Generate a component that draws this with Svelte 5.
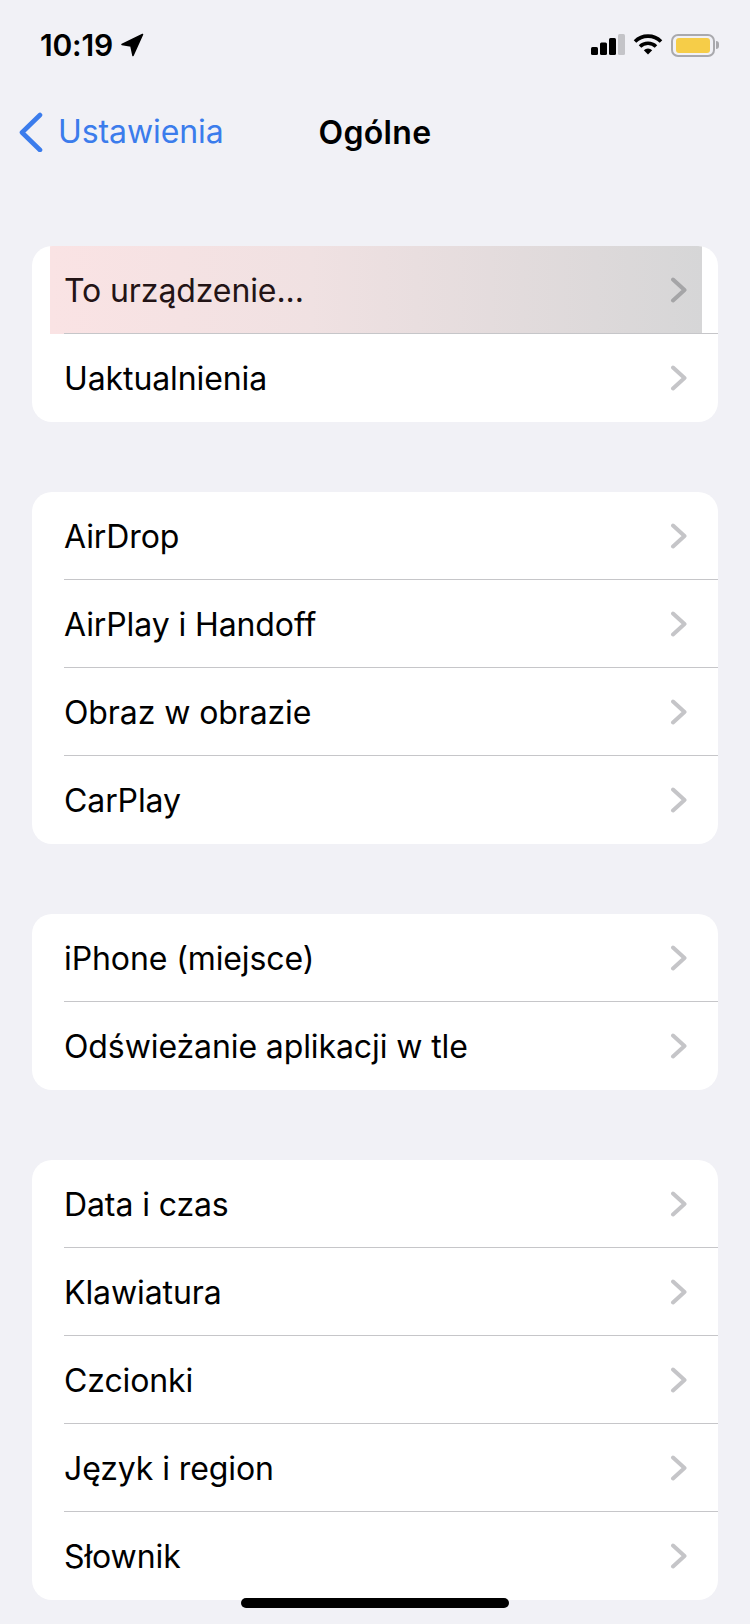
<script>
  const groups = [
    [{ label: 'To urządzenie...', active: true }, { label: 'Uaktualnienia' }],
    [{ label: 'AirDrop' }, { label: 'AirPlay i Handoff' }, { label: 'Obraz w obrazie' }, { label: 'CarPlay' }],
    [{ label: 'iPhone (miejsce)' }, { label: 'Odświeżanie aplikacji w tle' }],
    [{ label: 'Data i czas' }, { label: 'Klawiatura' }, { label: 'Czcionki' }, { label: 'Język i region' }, { label: 'Słownik' }]
  ];
</script>

<div class="screen">
  <div class="status">
    <div class="time">
      <span>10:19</span>
      <svg width="24" height="24" viewBox="0 0 24 24"><path d="M22.500 1.500 2 11.500 11 13l2 9.500z" fill="#000" stroke="#000" stroke-width="1.600" stroke-linejoin="round"/></svg>
    </div>
    <div class="indicators">
      <svg width="36" height="22" viewBox="0 0 36 22">
        <rect x="2" y="13" width="7" height="8" rx="1.500" fill="#000"/>
        <rect x="11" y="8.500" width="7" height="12.500" rx="1.500" fill="#000"/>
        <rect x="20" y="4" width="7" height="17" rx="1.500" fill="#000"/>
        <rect x="29" y="0" width="7" height="21" rx="1.500" fill="#c4c4c8"/>
      </svg>
      <svg width="30" height="22" viewBox="0 1 30 22" fill="none" stroke="#000" stroke-width="3.600">
        <path d="M2 8.500a18.500 18.500 0 0 1 26 0"/>
        <path d="M7 13.500a11.500 11.500 0 0 1 16 0"/>
        <path d="M15 21.500l-4.200-4.300a6 6 0 0 1 8.400 0z" fill="#000" stroke="none"/>
      </svg>
      <div class="battery">
        <div class="battery-body"><div class="battery-fill"></div></div>
        <div class="battery-cap"></div>
      </div>
    </div>
  </div>

  <div class="nav">
    <div class="back">
      <svg width="26" height="40" viewBox="0 0 26 40" fill="none" stroke="#3b7cec" stroke-width="4.600" stroke-linecap="round" stroke-linejoin="round"><path d="M22 3 4 20.500 22 38"/></svg>
      <span>Ustawienia</span>
    </div>
    <div class="title">Ogólne</div>
  </div>

  <div class="groups">
    {#each groups as group}
      <div class="group">
        {#each group as item}
          <div class="row" class:active={item.active}>
            <div class="row-inner">
              <span class="label">{item.label}</span>
              <svg class="chev" width="18" height="26" viewBox="0 0 18 26" fill="none" stroke-width="4" stroke-linecap="round" stroke-linejoin="round"><path d="M3 2.500 14.500 13 3 23.500"/></svg>
            </div>
          </div>
        {/each}
      </div>
    {/each}
  </div>

  <div class="home"></div>
</div>

<style>
  :global(body) {
    margin: 0;
    background: #f1f1f6;
  }

  .screen {
    position: relative;
    width: 750px;
    height: 1624px;
    overflow: hidden;
    background: #f1f1f6;
    font-family: Inter, "Liberation Sans", sans-serif;
    color: #000;
  }

  .status {
    height: 90px;
    box-sizing: border-box;
    padding: 28px 31px 0 40px;
    display: flex;
    justify-content: space-between;
    align-items: flex-start;
  }

  .time {
    display: flex;
    align-items: center;
    gap: 7px;
    font-size: 30px;
    line-height: 34px;
    font-weight: 600;
    letter-spacing: -0.2px;
  }

  .indicators {
    display: flex;
    align-items: center;
    gap: 8px;
    height: 34px;
  }

  .battery {
    display: flex;
    align-items: center;
    gap: 1px;
  }

  .battery-body {
    width: 44px;
    height: 23px;
    box-sizing: border-box;
    padding: 2px 3px;
    border: 2px solid #a9a9ad;
    border-radius: 7px;
  }

  .battery-fill {
    height: 100%;
    border-radius: 3px;
    background: #f6cd48;
  }

  .battery-cap {
    width: 3px;
    height: 8px;
    border-radius: 0 3px 3px 0;
    background: #a9a9ad;
  }

  .nav {
    position: relative;
    height: 84px;
    display: flex;
    align-items: center;
    justify-content: center;
  }

  .back {
    position: absolute;
    left: 18px;
    top: 22px;
    display: flex;
    align-items: center;
    gap: 14px;
    font-size: 32px;
    line-height: 40px;
    letter-spacing: -0.1px;
    color: #3b7cec;
  }

  .title {
    font-size: 32px;
    font-weight: 600;
    letter-spacing: 0.3px;
  }

  .groups {
    padding: 72px 32px 0;
    display: flex;
    flex-direction: column;
    gap: 70px;
  }

  .group {
    background: #fff;
    border-radius: 20px;
    overflow: hidden;
  }

  .row {
    position: relative;
    padding-left: 32px;
  }

  .row.active::before {
    content: "";
    position: absolute;
    left: 18px;
    right: 16px;
    top: 0;
    bottom: 0;
    background: linear-gradient(90deg, #fae3e4 0%, #f0e1e2 40%, #d6d6d7 100%);
  }

  .row-inner {
    position: relative;
    box-sizing: border-box;
    height: 88px;
    display: flex;
    align-items: center;
    justify-content: space-between;
    padding: 1px 30px 0 0;
    border-bottom: 1px solid #c6c6c9;
  }

  .row:last-child .row-inner {
    border-bottom: 0;
    padding-top: 0;
  }

  .label {
    font-size: 32px;
    letter-spacing: -0.1px;
  }

  .active .label {
    color: #231416;
  }

  .chev {
    stroke: #c5c5c8;
  }

  .active .chev {
    stroke: #a5a5a7;
  }

  .home {
    position: absolute;
    left: 241px;
    top: 1598px;
    width: 268px;
    height: 10px;
    border-radius: 5px;
    background: #000;
  }
</style>
